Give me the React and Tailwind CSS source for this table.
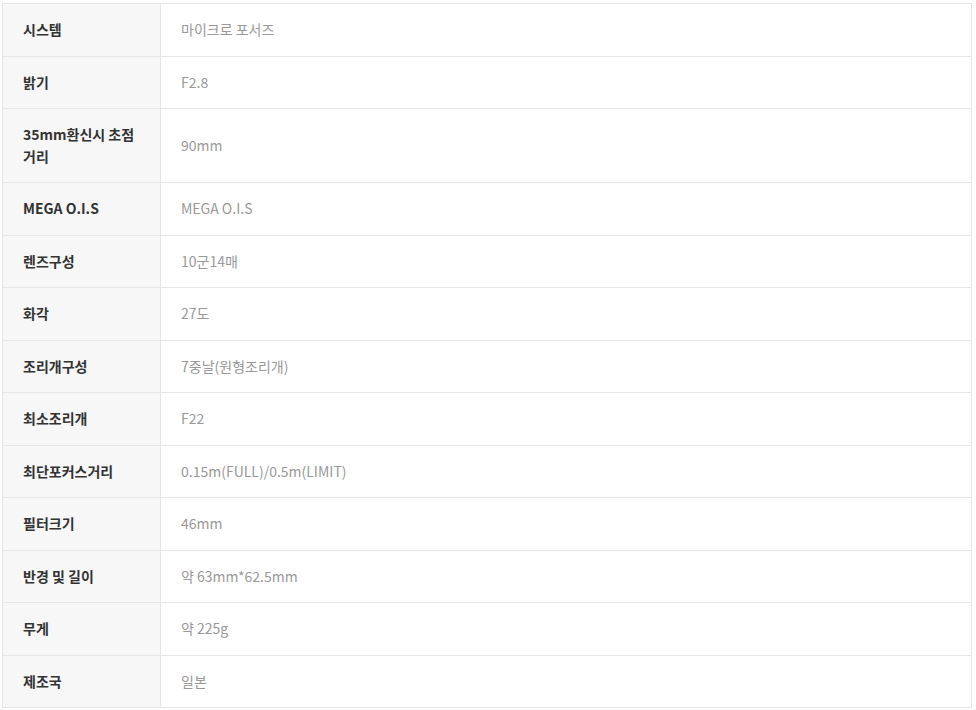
const rows = [
  ["시스템", "마이크로 포서즈"],
  ["밝기", "F2.8"],
  ["35mm환신시 초점 거리", "90mm"],
  ["MEGA O.I.S", "MEGA O.I.S"],
  ["렌즈구성", "10군14매"],
  ["화각", "27도"],
  ["조리개구성", "7중날(원형조리개)"],
  ["최소조리개", "F22"],
  ["최단포커스거리", "0.15m(FULL)/0.5m(LIMIT)"],
  ["필터크기", "46mm"],
  ["반경 및 길이", "약 63mm*62.5mm"],
  ["무게", "약 225g"],
  ["제조국", "일본"],
];

export default function App() {
  return (
    <div
      className="bg-white pl-[2px] pt-[3px] w-[976px] h-[710px]"
      style={{ fontFamily: '"Noto Sans CJK KR", "Noto Sans", sans-serif' }}
    >
      <table className="w-[970px] border-collapse border border-[#e6e6e6] text-[14px] leading-[21.5px]">
        <tbody>
          {rows.map(([k, v]) => (
            <tr key={k} className="border-b border-[#e6e6e6]">
              <th className="w-[158px] bg-[#f7f7f7] border-r border-[#e6e6e6] px-[20px] py-[15px] text-left font-bold text-[#333] align-middle">
                {k}
              </th>
              <td className="px-[20px] py-[15px] text-left text-[#999] align-middle">
                {v}
              </td>
            </tr>
          ))}
        </tbody>
      </table>
    </div>
  );
}
